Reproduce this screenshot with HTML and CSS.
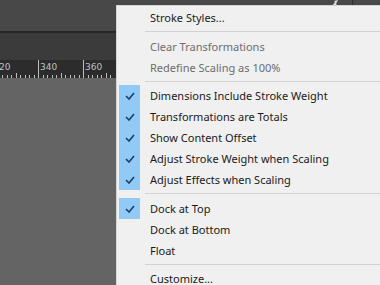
FILE: index.html
```html
<!DOCTYPE HTML>
<html>
  <head>
    <meta http-equiv="content-type" content="text/html; charset=utf-8">
    <title>Stroke Menu</title>
    <link rel="stylesheet" href="styles.css">
  </head>
  <body>
    <div id="workspace">
      <div class="toolbar">
        <svg class="toolIcon" width="10" height="6" viewBox="0 0 10 6">
          <path d="M2 6 L5 2 L4 1 L8 0 L6 4 L7 5 Z" fill="#d8d8d8"/>
        </svg>
        <div class="toolDivider"></div>
      </div>
      <div class="toolbarEdge"></div>
      <div class="panelStrip"></div>
      <div class="ruler">
        <svg width="116" height="18" viewBox="0 0 116 18">
          <g stroke="#bdbdbd" stroke-width="1">
            <line x1="38.5" y1="0" x2="38.5" y2="18"/>
            <line x1="83.5" y1="0" x2="83.5" y2="18"/>
            <line x1="2.5" y1="15" x2="2.5" y2="18"/>
            <line x1="7.5" y1="15" x2="7.5" y2="18"/>
            <line x1="11.5" y1="15" x2="11.5" y2="18"/>
            <line x1="16.5" y1="13" x2="16.5" y2="18"/>
            <line x1="20.5" y1="15" x2="20.5" y2="18"/>
            <line x1="25.5" y1="15" x2="25.5" y2="18"/>
            <line x1="29.5" y1="15" x2="29.5" y2="18"/>
            <line x1="34.5" y1="15" x2="34.5" y2="18"/>
            <line x1="43.5" y1="15" x2="43.5" y2="18"/>
            <line x1="47.5" y1="15" x2="47.5" y2="18"/>
            <line x1="52.5" y1="15" x2="52.5" y2="18"/>
            <line x1="56.5" y1="15" x2="56.5" y2="18"/>
            <line x1="61.5" y1="13" x2="61.5" y2="18"/>
            <line x1="65.5" y1="15" x2="65.5" y2="18"/>
            <line x1="70.5" y1="15" x2="70.5" y2="18"/>
            <line x1="74.5" y1="15" x2="74.5" y2="18"/>
            <line x1="79.5" y1="15" x2="79.5" y2="18"/>
            <line x1="88.5" y1="15" x2="88.5" y2="18"/>
            <line x1="92.5" y1="15" x2="92.5" y2="18"/>
            <line x1="97.5" y1="15" x2="97.5" y2="18"/>
            <line x1="101.5" y1="15" x2="101.5" y2="18"/>
            <line x1="106.5" y1="13" x2="106.5" y2="18"/>
            <line x1="110.5" y1="15" x2="110.5" y2="18"/>
          </g>
          <g class="rulerText">
            <text x="-1" y="10">20</text>
            <text x="40" y="10">340</text>
            <text x="85" y="10">360</text>
          </g>
        </svg>
      </div>
      <div class="canvas"></div>
    </div>

    <div class="menu">
      <div class="menuItem"><span class="check"></span><span class="label">Stroke Styles...</span></div>
      <div class="separator wide"></div>
      <div class="menuItem disabled"><span class="check"></span><span class="label">Clear Transformations</span></div>
      <div class="menuItem disabled"><span class="check"></span><span class="label">Redefine Scaling as 100%</span></div>
      <div class="separator"></div>
      <div class="checkGroup">
        <div class="menuItem checked"><span class="check"><svg width="10" height="8" viewBox="0 0 10 8"><polyline points="1,4 4,7 9,1"/></svg></span><span class="label">Dimensions Include Stroke Weight</span></div>
        <div class="menuItem checked"><span class="check"><svg width="10" height="8" viewBox="0 0 10 8"><polyline points="1,4 4,7 9,1"/></svg></span><span class="label">Transformations are Totals</span></div>
        <div class="menuItem checked"><span class="check"><svg width="10" height="8" viewBox="0 0 10 8"><polyline points="1,4 4,7 9,1"/></svg></span><span class="label">Show Content Offset</span></div>
        <div class="menuItem checked"><span class="check"><svg width="10" height="8" viewBox="0 0 10 8"><polyline points="1,4 4,7 9,1"/></svg></span><span class="label">Adjust Stroke Weight when Scaling</span></div>
        <div class="menuItem checked"><span class="check"><svg width="10" height="8" viewBox="0 0 10 8"><polyline points="1,4 4,7 9,1"/></svg></span><span class="label">Adjust Effects when Scaling</span></div>
      </div>
      <div class="separator wide"></div>
      <div class="menuItem checked"><span class="check"><svg width="10" height="8" viewBox="0 0 10 8"><polyline points="1,4 4,7 9,1"/></svg></span><span class="label">Dock at Top</span></div>
      <div class="menuItem"><span class="check"></span><span class="label">Dock at Bottom</span></div>
      <div class="menuItem"><span class="check"></span><span class="label">Float</span></div>
      <div class="separator"></div>
      <div class="menuItem"><span class="check"></span><span class="label">Customize...</span></div>
    </div>
  </body>
</html>
```

FILE: styles.css
```css
html, body {
  margin: 0;
  padding: 0;
  width: 380px;
  height: 285px;
  overflow: hidden;
}

body {
  position: relative;
  background-color: #646464;
  font-family: "Noto Sans", "Open Sans", sans-serif;
}

#workspace {
  display: flex;
  flex-direction: column;
  height: 285px;
}

.toolbar {
  height: 31px;
  background-color: #484848;
  display: flex;
  justify-content: flex-end;
  align-items: flex-start;
}

.toolIcon {
  margin-right: 12px;
}

.toolDivider {
  width: 1px;
  height: 6px;
  background-color: #2e2e2e;
  margin-right: 27px;
}

.toolbarEdge {
  height: 2px;
  background-color: #262626;
}

.panelStrip {
  height: 27px;
  background-color: #3b3b3b;
}

.ruler {
  height: 18px;
  background-color: #2c2c2c;
  display: flex;
}

.rulerText {
  font-family: "DejaVu Sans", sans-serif;
  font-size: 9px;
  fill: #c0c0c0;
}

.canvas {
  flex: 1;
  background-color: #646464;
}

.menu {
  position: absolute;
  left: 116px;
  top: 5px;
  width: 290px;
  height: 300px;
  background-color: #f0f0f0;
  border-left: 1px solid #d4d4d4;
  border-top: 1px solid #d4d4d4;
  padding-top: 1px;
  box-sizing: border-box;
}

.menuItem {
  height: 21px;
  display: flex;
  align-items: center;
  font-size: 11px;
  color: #1a1a1a;
}

.menuItem.disabled {
  color: #6d6d6d;
}

.check {
  width: 21px;
  height: 21px;
  margin-left: 2px;
  display: flex;
  align-items: center;
  justify-content: center;
  flex-shrink: 0;
}

.checked .check {
  background-color: #91c9f7;
}

.check svg polyline {
  fill: none;
  stroke: #1c3f66;
  stroke-width: 1.6;
}

.label {
  margin-left: 10px;
  white-space: nowrap;
}

.separator {
  height: 1px;
  background-color: #d2d2d2;
  margin: 3px 10px 3px 28px;
}

.separator.wide {
  margin-bottom: 4px;
}
```
